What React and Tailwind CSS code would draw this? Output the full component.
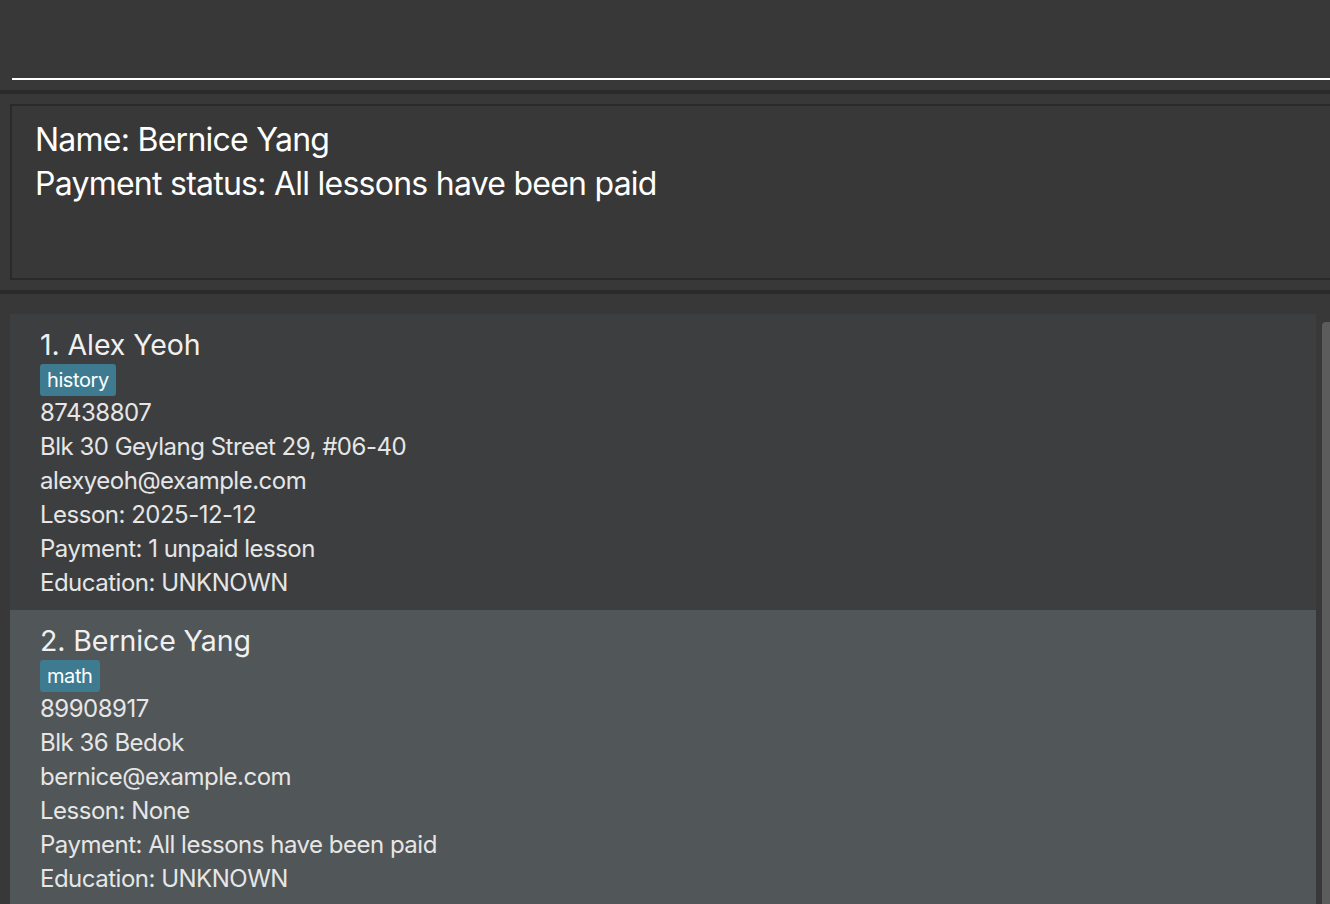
import React from 'react'

const students = [
  {
    name: 'Alex Yeoh',
    tag: 'history',
    phone: '87438807',
    address: 'Blk 30 Geylang Street 29, #06-40',
    email: 'alexyeoh@example.com',
    lesson: '2025-12-12',
    payment: '1 unpaid lesson',
    education: 'UNKNOWN'
  },
  {
    name: 'Bernice Yang',
    tag: 'math',
    phone: '89908917',
    address: 'Blk 36 Bedok',
    email: 'bernice@example.com',
    lesson: 'None',
    payment: 'All lessons have been paid',
    education: 'UNKNOWN'
  }
]

function StudentCard({ student, index, selected }) {
  return (
    <div
      className={`pl-[30px] pt-[13px] pb-[10px] ${selected ? 'bg-[#515658]' : 'bg-[#3d3e40]'}`}
    >
      <div className="text-[28.5px] leading-[36px] text-[#f0f0f0] tracking-[-0.1px]">
        {index}. {student.name}
      </div>
      <div className="flex mt-[1px]">
        <span className="bg-[#3e7b91] text-white text-[20px] leading-[32px] px-[7px] rounded-[3px] tracking-[-0.4px]">
          {student.tag}
        </span>
      </div>
      <div className="text-[24px] leading-[34px] text-[#e6e6e6] tracking-[-0.5px]">
        <div>{student.phone}</div>
        <div>{student.address}</div>
        <div>{student.email}</div>
        <div>Lesson: {student.lesson}</div>
        <div>Payment: {student.payment}</div>
        <div>Education: {student.education}</div>
      </div>
    </div>
  )
}

export default function App() {
  return (
    <div
      className="w-[1330px] h-[904px] bg-[#383838] overflow-hidden flex flex-col"
      style={{ fontFamily: 'Inter, "Noto Sans", sans-serif' }}
    >
      {/* Command box */}
      <div className="h-[90px] shrink-0 pl-[12px]">
        <div className="h-[80px] border-b-2 border-white" />
      </div>

      <div className="h-[4px] shrink-0 bg-[#2a2a2a]" />

      {/* Result display */}
      <div className="h-[196px] shrink-0 pt-[10px] pl-[10px]">
        <div className="h-[176px] border-2 border-r-0 border-[#2a2a2a] pl-[23px] pt-[12px] text-[32px] leading-[44px] text-white tracking-[-0.75px]">
          <div>Name: Bernice Yang</div>
          <div>Payment status: All lessons have been paid</div>
        </div>
      </div>

      <div className="h-[4px] shrink-0 bg-[#2a2a2a]" />

      {/* Student list */}
      <div className="flex-1 flex pt-[20px] pl-[10px] min-h-0">
        <div className="w-[1306px] flex flex-col">
          {students.map((s, i) => (
            <StudentCard key={s.name} student={s} index={i + 1} selected={i === 1} />
          ))}
        </div>
        <div className="ml-[6px] mt-[8px] w-[8px] bg-[#5c5c5c] rounded-tl-[4px]" />
      </div>
    </div>
  )
}
